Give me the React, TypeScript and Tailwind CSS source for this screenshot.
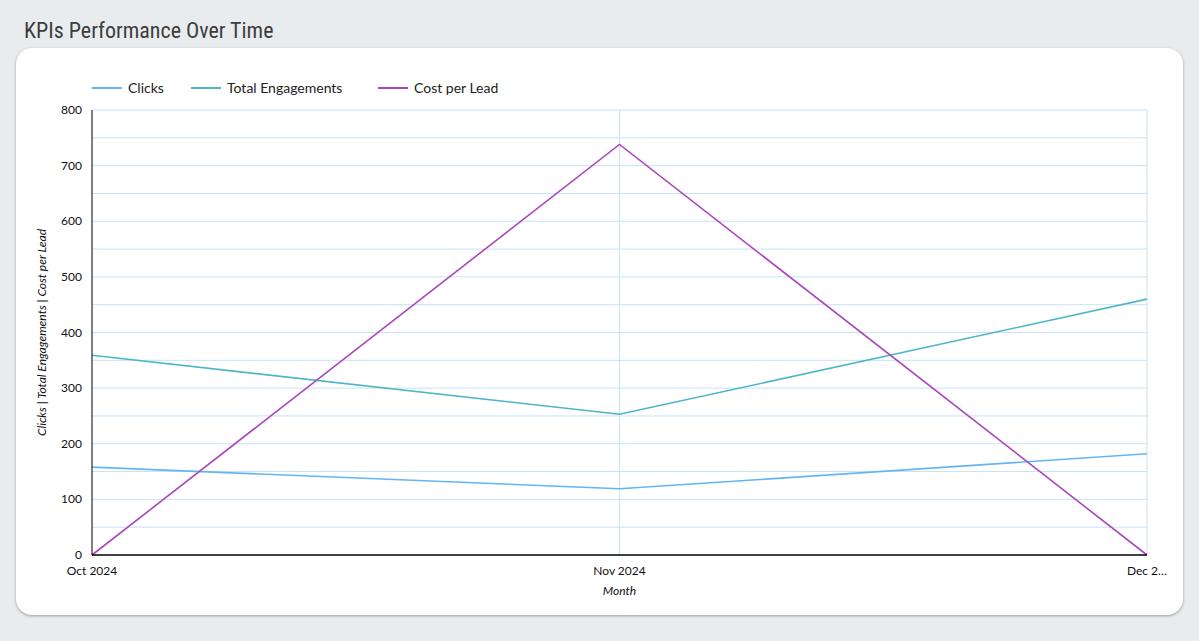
const X0 = 76, X1 = 1131, Y0 = 507, Y1 = 62

const yPos = (v: number) => Y0 - (v / 800) * (Y0 - Y1)
const xPos = (i: number) => X0 + (i * (X1 - X0)) / 2

const SERIES = [
  { name: 'Clicks', color: '#64b5f6', data: [158, 119, 182] },
  { name: 'Total Engagements', color: '#4db6c8', data: [359, 253, 460] },
  { name: 'Cost per Lead', color: '#ab47bc', data: [0, 738, 0] },
]

function Chart() {
  const grid = Array.from({ length: 16 }, (_, i) => i * 50 + 50)
  const ticks = [0, 100, 200, 300, 400, 500, 600, 700, 800]
  const months = ['Oct 2024', 'Nov 2024', 'Dec 2…']
  const legendX = [76, 175, 362]
  return (
    <svg width="1167" height="567" className="block" style={{ fontFamily: 'Lato, sans-serif' }}>
      {SERIES.map((s, i) => (
        <g key={s.name}>
          <line x1={legendX[i]} x2={legendX[i] + 30} y1={40} y2={40} stroke={s.color} strokeWidth={2} />
          <text x={legendX[i] + 36} y={45} fontSize={14} fill="#222">{s.name}</text>
        </g>
      ))}
      {grid.map((v) => (
        <line key={v} x1={X0} x2={X1} y1={yPos(v)} y2={yPos(v)} stroke="#c6e3f7" strokeWidth={1} />
      ))}
      {[1, 2].map((i) => (
        <line key={i} x1={xPos(i)} x2={xPos(i)} y1={Y1} y2={Y0} stroke="#c6e3f7" strokeWidth={1} />
      ))}
      {ticks.map((v) => (
        <text key={v} x={X0 - 10} y={yPos(v) + 4} fontSize={12} textAnchor="end" fill="#111">{v}</text>
      ))}
      {months.map((m, i) => (
        <text key={m} x={xPos(i)} y={Y0 + 20} fontSize={12} textAnchor={i === 2 ? 'middle' : 'middle'} fill="#111">{m}</text>
      ))}
      <text x={(X0 + X1) / 2} y={Y0 + 40} fontSize={12} fontStyle="italic" textAnchor="middle" fill="#111">Month</text>
      <text transform={`translate(30 ${(Y0 + Y1) / 2}) rotate(-90)`} fontSize={12} fontStyle="italic" textAnchor="middle" fill="#111">
        Clicks | Total Engagements | Cost per Lead
      </text>
      {SERIES.map((s) => (
        <polyline
          key={s.name}
          points={s.data.map((v, i) => `${xPos(i)},${yPos(v)}`).join(' ')}
          fill="none"
          stroke={s.color}
          strokeWidth={1.6}
        />
      ))}
      <line x1={X0} x2={X0} y1={Y1} y2={Y0} stroke="#000" strokeWidth={1} />
      <line x1={X0} x2={X1} y1={Y0} y2={Y0} stroke="#000" strokeWidth={1.5} />
    </svg>
  )
}

export default function App() {
  return (
    <div className="min-h-[641px] w-[1199px] bg-[#e9ecef] px-4 pt-[14px]">
      <h1 className="ml-[8px] text-[22px] leading-[34px] text-[#3d3d3d]" style={{ fontFamily: 'Roboto, sans-serif', fontStretch: 'condensed' }}>
        KPIs Performance Over Time
      </h1>
      <div className="mt-[0px] w-[1167px] overflow-hidden rounded-2xl bg-white shadow-[0_1px_3px_rgba(0,0,0,0.35)]">
        <Chart />
      </div>
    </div>
  )
}
